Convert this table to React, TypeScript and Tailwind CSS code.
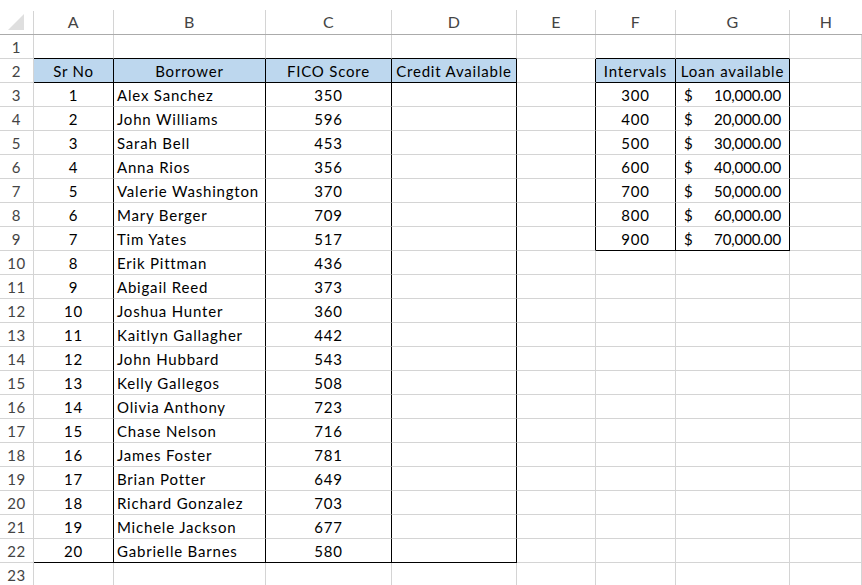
import React from 'react';

// Sheet columns: row-number gutter first, then A..H
const COLS = ['', 'A', 'B', 'C', 'D', 'E', 'F', 'G', 'H'];

const borrowers: [number, string, number][] = [
  [1, 'Alex Sanchez', 350],
  [2, 'John Williams', 596],
  [3, 'Sarah Bell', 453],
  [4, 'Anna Rios', 356],
  [5, 'Valerie Washington', 370],
  [6, 'Mary Berger', 709],
  [7, 'Tim Yates', 517],
  [8, 'Erik Pittman', 436],
  [9, 'Abigail Reed', 373],
  [10, 'Joshua Hunter', 360],
  [11, 'Kaitlyn Gallagher', 442],
  [12, 'John Hubbard', 543],
  [13, 'Kelly Gallegos', 508],
  [14, 'Olivia Anthony', 723],
  [15, 'Chase Nelson', 716],
  [16, 'James Foster', 781],
  [17, 'Brian Potter', 649],
  [18, 'Richard Gonzalez', 703],
  [19, 'Michele Jackson', 677],
  [20, 'Gabrielle Barnes', 580],
];

const loans: [number, string][] = [
  [300, '10,000.00'],
  [400, '20,000.00'],
  [500, '30,000.00'],
  [600, '40,000.00'],
  [700, '50,000.00'],
  [800, '60,000.00'],
  [900, '70,000.00'],
];

type Cell = { text?: React.ReactNode; align?: 'left' | 'center' | 'right' | 'money'; head?: boolean };

function cellAt(row: number, col: number): Cell {
  if (row === 2) {
    const heads: Record<number, string> = { 1: 'Sr No', 2: 'Borrower', 3: 'FICO Score', 4: 'Credit Available', 6: 'Intervals', 7: 'Loan available' };
    if (heads[col]) return { text: heads[col], align: 'center', head: true };
  }
  const b = borrowers[row - 3];
  if (b) {
    if (col === 1) return { text: b[0], align: 'center' };
    if (col === 2) return { text: b[1], align: 'left' };
    if (col === 3) return { text: b[2], align: 'center' };
  }
  const l = loans[row - 3];
  if (l) {
    if (col === 6) return { text: l[0], align: 'center' };
    if (col === 7) return { text: l[1], align: 'money' };
  }
  return {};
}

// which table a cell belongs to, for the black borders
const inT1 = (r: number, c: number) => r >= 2 && r <= 22 && c >= 1 && c <= 4;
const inT2 = (r: number, c: number) => r >= 2 && r <= 9 && c >= 6 && c <= 7;
const inTable = (r: number, c: number) => inT1(r, c) || inT2(r, c);

function blackRight(r: number, c: number) {
  if (c === 0) return false;
  return inTable(r, c) || inT2(r, c + 1);
}

function blackBottom(r: number, c: number) {
  if (!inTable(r, c) && !inTable(r + 1, c)) return false;
  if (r === 1 || r === 2) return true;
  if (inT1(r, c) && r === 22) return true;
  if (inT2(r, c) && r === 9) return true;
  return false;
}

export default function App() {
  const rows = Array.from({ length: 23 }, (_, i) => i + 1);

  return (
    <div className="w-[862px] h-[585px] overflow-hidden bg-white font-['Lato','Open_Sans',sans-serif] text-[15px] text-black">
      <div className="grid grid-cols-[34px_80px_152px_126px_125px_79px_80px_114px_1fr] grid-rows-[35px_repeat(23,24px)]">
        {/* column headers */}
        {COLS.map((c, i) => (
          <div key={'h' + i} className="flex flex-col border-b border-[#ababab]">
            <div className="h-[11px]" />
            <div className={`flex-1 flex items-center justify-center text-[#444] text-[16px] tracking-[0.5px] ${i === 8 ? '' : 'border-r'} border-[#d4d4d4]`}>
              {i === 0 ? (
                <svg width="18" height="18" viewBox="0 0 18 18" className="mb-[2px] ml-[-2px]">
                  <polygon points="17,1 17,17 1,17" fill="#dfdfdf" />
                </svg>
              ) : (
                c
              )}
            </div>
          </div>
        ))}

        {rows.map((r) =>
          COLS.map((_, c) => {
            if (c === 0) {
              return (
                <div key={r + '-0'} className="flex items-center justify-center pt-[2px] border-r border-b border-[#d4d4d4] text-[#444] tracking-[0.6px]">
                  {r}
                </div>
              );
            }
            const cell = cellAt(r, c);
            const right = blackRight(r, c) ? 'border-r-black' : 'border-r-[#d4d4d4]';
            const bottom = blackBottom(r, c) ? 'border-b-black' : 'border-b-[#d4d4d4]';
            const bg = cell.head ? 'bg-[#bdd7ee]' : '';
            let align = 'justify-center';
            if (cell.align === 'left') align = 'justify-start pl-[3px]';
            if (cell.align === 'money') align = 'justify-between pl-[8px] pr-[8px]';
            return (
              <div
                key={r + '-' + c}
                className={`flex items-center pt-[2px] whitespace-nowrap overflow-hidden tracking-[0.8px] border-r border-b ${right} ${bottom} ${bg} ${align}`}
              >
                {cell.align === 'money' ? (
                  <>
                    <span>$</span>
                    <span className="tracking-[-0.1px]">{cell.text}</span>
                  </>
                ) : (
                  cell.text
                )}
              </div>
            );
          })
        )}
      </div>
    </div>
  );
}
